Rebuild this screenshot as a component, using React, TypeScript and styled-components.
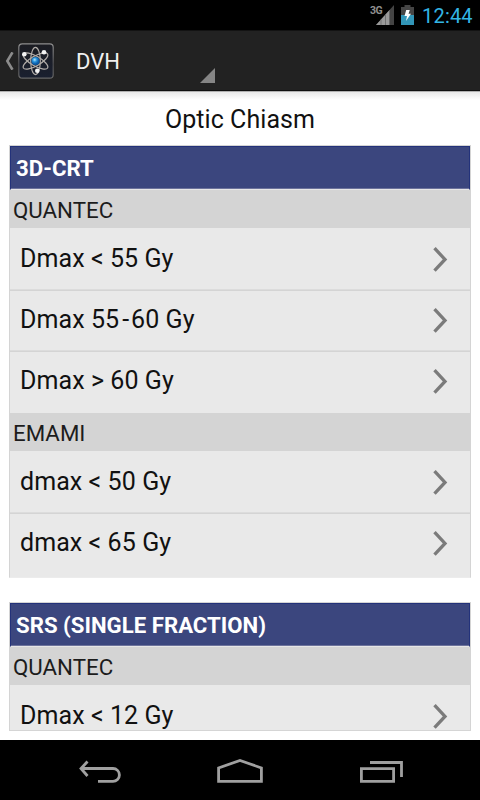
import React from "react";
import styled, { createGlobalStyle } from "styled-components";

const GlobalStyle = createGlobalStyle`
  * { box-sizing: border-box; }
  html, body { margin: 0; padding: 0; background: #000; }
  body { font-family: Roboto, "Liberation Sans", sans-serif; overflow: hidden; }
  svg { display: block; flex: none; }
`;

const Screen = styled.div`
  width: 480px;
  height: 800px;
  display: flex;
  flex-direction: column;
  background: #fff;
  overflow: hidden;
`;

const StatusBar = styled.header`
  height: 31px;
  flex: none;
  display: flex;
  align-items: flex-start;
  background: #000;
  border-bottom: 1px solid #131313;
  padding-left: 370px;
`;

const Clock = styled.span`
  margin: 4px 0 0 8px;
  font-size: 20px;
  line-height: 24px;
  color: #33b5e5;
  letter-spacing: 0.2px;
`;

const Signal = styled.div`
  display: flex;
  width: 24px;
`;

const Network = styled.span`
  width: 12px;
  margin-top: 5px;
  font-size: 10.5px;
  font-weight: 700;
  line-height: 12px;
  letter-spacing: -0.5px;
  color: #909090;
`;

const BarsIcon = styled.svg`
  margin: 5px 0 0 0;
  overflow: visible;
`;

const BatteryIcon = styled.svg`
  margin: 5px 0 0 7px;
`;

const ActionBar = styled.nav`
  height: 60px;
  flex: none;
  display: flex;
  align-items: center;
  background: #222;
  border-bottom: 1px solid #101010;
  padding-left: 5px;
`;

const AppIcon = styled.svg`
  margin-left: 4px;
`;

const Spinner = styled.div`
  width: 154px;
  height: 59px;
  margin-left: 7px;
  display: flex;
  justify-content: space-between;
  align-items: flex-end;
`;

const SpinnerLabel = styled.span`
  padding-left: 15px;
  font-size: 22px;
  line-height: 28px;
  margin-bottom: 14px;
  color: #f0f0f0;
`;

const Corner = styled.svg`
  margin-bottom: 7px;
`;

const Content = styled.main`
  height: 649px;
  flex: none;
  padding: 14px 9px 0;
  overflow: hidden;
  background: linear-gradient(#777 0, #e8e8e8 1px, #fff 9px);
`;

const Viewport = styled.div`
  height: 626px;
  border-bottom: 1px solid #d5d5d5;
  overflow: hidden;
`;

const Title = styled.h1`
  height: 40px;
  margin: 0;
  text-align: center;
  font-size: 25px;
  font-weight: 400;
  line-height: 29px;
  color: #111;
  letter-spacing: 0.05px;
`;

const Group = styled.section`
  border: 1px solid #d4d4d4;
  border-bottom-color: #ececec;
  margin-bottom: 24px;
`;

const GroupHeader = styled.h2`
  height: 44px;
  margin: 0;
  padding-left: 5px;
  font-size: 22.2px;
  font-weight: 700;
  line-height: 43px;
  color: #fff;
  background: #3b467e;
  border: 1px solid #23327a;
  border-bottom-color: #e6e6e6;
  box-shadow: inset 0 -1px #6d739c;
`;

const Source = styled.h3`
  height: 38px;
  margin: 0;
  padding-left: 3px;
  font-size: 22.3px;
  font-weight: 400;
  line-height: 41px;
  color: #1c1c1c;
  background: #d4d4d4;
`;

const Rows = styled.ul`
  margin: 0;
  padding: 0;
  list-style: none;
  background: #e9e9e9;
`;

const Row = styled.li<{ $height: number }>`
  height: ${(p) => p.$height}px;
  display: flex;
  align-items: flex-start;
  justify-content: space-between;
  padding: 17px 22px 0 10px;
  & + & { background: linear-gradient(#dcdcdc 1px, #d4d4d4 1px, #d4d4d4 2px, transparent 2px); }
`;

const RowLabel = styled.span`
  font-size: 25px;
  line-height: 28px;
  letter-spacing: 0.07px;
  color: #111;
`;

const Dash = styled.span`
  padding: 0 2px 0 3px;
`;

const RowArrow = styled.svg`
  margin-top: 1px;
`;

const NavBar = styled.footer`
  height: 60px;
  flex: none;
  display: grid;
  grid-template-columns: 200px 80px 200px;
  background: #000;
  & svg { fill: none; stroke: #a0a0a0; stroke-width: 2.8; }
`;

type Item = { label: string; height: number };
type Block = { source: string; items: Item[] };

const groups: { name: string; blocks: Block[] }[] = [
  {
    name: "3D-CRT",
    blocks: [
      {
        source: "QUANTEC",
        items: [
          { label: "Dmax < 55 Gy", height: 61 },
          { label: "Dmax 55-60 Gy", height: 61 },
          { label: "Dmax > 60 Gy", height: 63 },
        ],
      },
      {
        source: "EMAMI",
        items: [
          { label: "dmax < 50 Gy", height: 61 },
          { label: "dmax < 65 Gy", height: 65 },
        ],
      },
    ],
  },
  {
    name: "SRS (SINGLE FRACTION)",
    blocks: [{ source: "QUANTEC", items: [{ label: "Dmax < 12 Gy", height: 61 }] }],
  },
];

const Label = ({ text }: { text: string }) => {
  const [before, after] = text.split("-");
  return (
    <RowLabel>
      {before}
      {after && <Dash>-</Dash>}
      {after}
    </RowLabel>
  );
};

const Arrow = () => (
  <RowArrow width="16" height="28" viewBox="0 0 16 28">
    <path d="M2.5 2.2 L13 13.5 L2.5 24.7" fill="none" stroke="#7b7b7b" strokeWidth="3.3" />
  </RowArrow>
);

const Atom = () => (
  <AppIcon width="36" height="36" viewBox="0 0 36 36">
    <defs>
      <linearGradient id="tile" x1="0" y1="0" x2="0" y2="1">
        <stop offset="0" stopColor="#1b1c22" />
        <stop offset="1" stopColor="#1a2030" />
      </linearGradient>
      <linearGradient id="rim" x1="0" y1="0" x2="0" y2="1">
        <stop offset="0" stopColor="#8d8d8d" />
        <stop offset="0.6" stopColor="#4d4d50" />
        <stop offset="1" stopColor="#666" />
      </linearGradient>
      <radialGradient id="core" cx="0.4" cy="0.35">
        <stop offset="0" stopColor="#b5e8ff" />
        <stop offset="0.5" stopColor="#2994dd" />
        <stop offset="1" stopColor="#0c5ca8" />
      </radialGradient>
    </defs>
    <rect x="0.8" y="0.8" width="34.4" height="34.4" rx="3.5" fill="url(#tile)" stroke="url(#rim)" strokeWidth="1.2" />
    <g fill="none" stroke="#b3aeaa" strokeWidth="1.2">
      <ellipse cx="17.5" cy="18" rx="4.8" ry="13.6" />
      <ellipse cx="17.5" cy="18" rx="4.8" ry="14" transform="rotate(60 17.5 18)" />
      <ellipse cx="17.5" cy="18" rx="4.8" ry="14" transform="rotate(-60 17.5 18)" />
    </g>
    <circle cx="17.5" cy="18" r="4.1" fill="url(#core)" />
    <g fill="#f4f4f4">
      <circle cx="6.3" cy="11.2" r="2.3" />
      <circle cx="26" cy="9.3" r="2.3" />
      <circle cx="19.3" cy="27.8" r="2.3" />
    </g>
  </AppIcon>
);

export default function App() {
  return (
    <Screen>
      <GlobalStyle />
      <StatusBar>
        <Signal>
          <Network>3G</Network>
          <BarsIcon width="12" height="20" viewBox="0 0 12 20">
            <path d="M12 0 V20 H-6 Z" fill="#444" />
            <path d="M-6 20 L7.5 5 V20 Z" fill="#999" />
            <path d="M-1 14.5 V20 M3.5 9 V20 M7.5 5 V20" stroke="#666" strokeWidth="0.8" />
          </BarsIcon>
        </Signal>
        <BatteryIcon width="13" height="20" viewBox="0 0 13 20">
          <path d="M3.5 0 H9.5 V2 H13 V20 H0 V2 H3.5 Z" fill="#454545" />
          <rect y="10" width="13" height="10" fill="#3296b8" />
          <path d="M5.2 5 H8.8 L7.5 8.8 H10 L5 16 L6 11 H3.5 Z" fill="#fff" />
        </BatteryIcon>
        <Clock>12:44</Clock>
      </StatusBar>

      <ActionBar>
        <svg width="9" height="18" viewBox="0 0 9 18">
          <path d="M7.5 0.3 L2.3 9 L7.5 17.7" fill="none" stroke="#8b8b8b" strokeWidth="2.6" />
        </svg>
        <Atom />
        <Spinner>
          <SpinnerLabel>DVH</SpinnerLabel>
          <Corner width="15" height="15" viewBox="0 0 15 15">
            <path d="M15 0 V15 H0 Z" fill="#858585" />
          </Corner>
        </Spinner>
      </ActionBar>

      <Content>
        <Viewport>
          <Title>Optic Chiasm</Title>
          {groups.map((group) => (
            <Group key={group.name}>
              <GroupHeader>{group.name}</GroupHeader>
              {group.blocks.map((block) => (
                <React.Fragment key={block.source}>
                  <Source>{block.source}</Source>
                  <Rows>
                    {block.items.map((item) => (
                      <Row key={item.label} $height={item.height}>
                        <Label text={item.label} />
                        <Arrow />
                      </Row>
                    ))}
                  </Rows>
                </React.Fragment>
              ))}
            </Group>
          ))}
        </Viewport>
      </Content>

      <NavBar>
        <svg width="200" height="60" viewBox="0 0 200 60">
          <path d="M81 28.5 H113 A6.3 6.3 0 0 1 113 41.3 H98 M87.5 21.5 L81 28.5 L87.5 36" />
        </svg>
        <svg width="80" height="60" viewBox="0 0 80 60">
          <path d="M18.6 41.4 V28 L40 20.4 L61.4 28 V41.4 Z" />
        </svg>
        <svg width="200" height="60" viewBox="0 0 200 60">
          <path d="M81.4 28.7 H113.6 V41.4 H81.4 Z M90 22.5 H121.5 V37" />
        </svg>
      </NavBar>
    </Screen>
  );
}
